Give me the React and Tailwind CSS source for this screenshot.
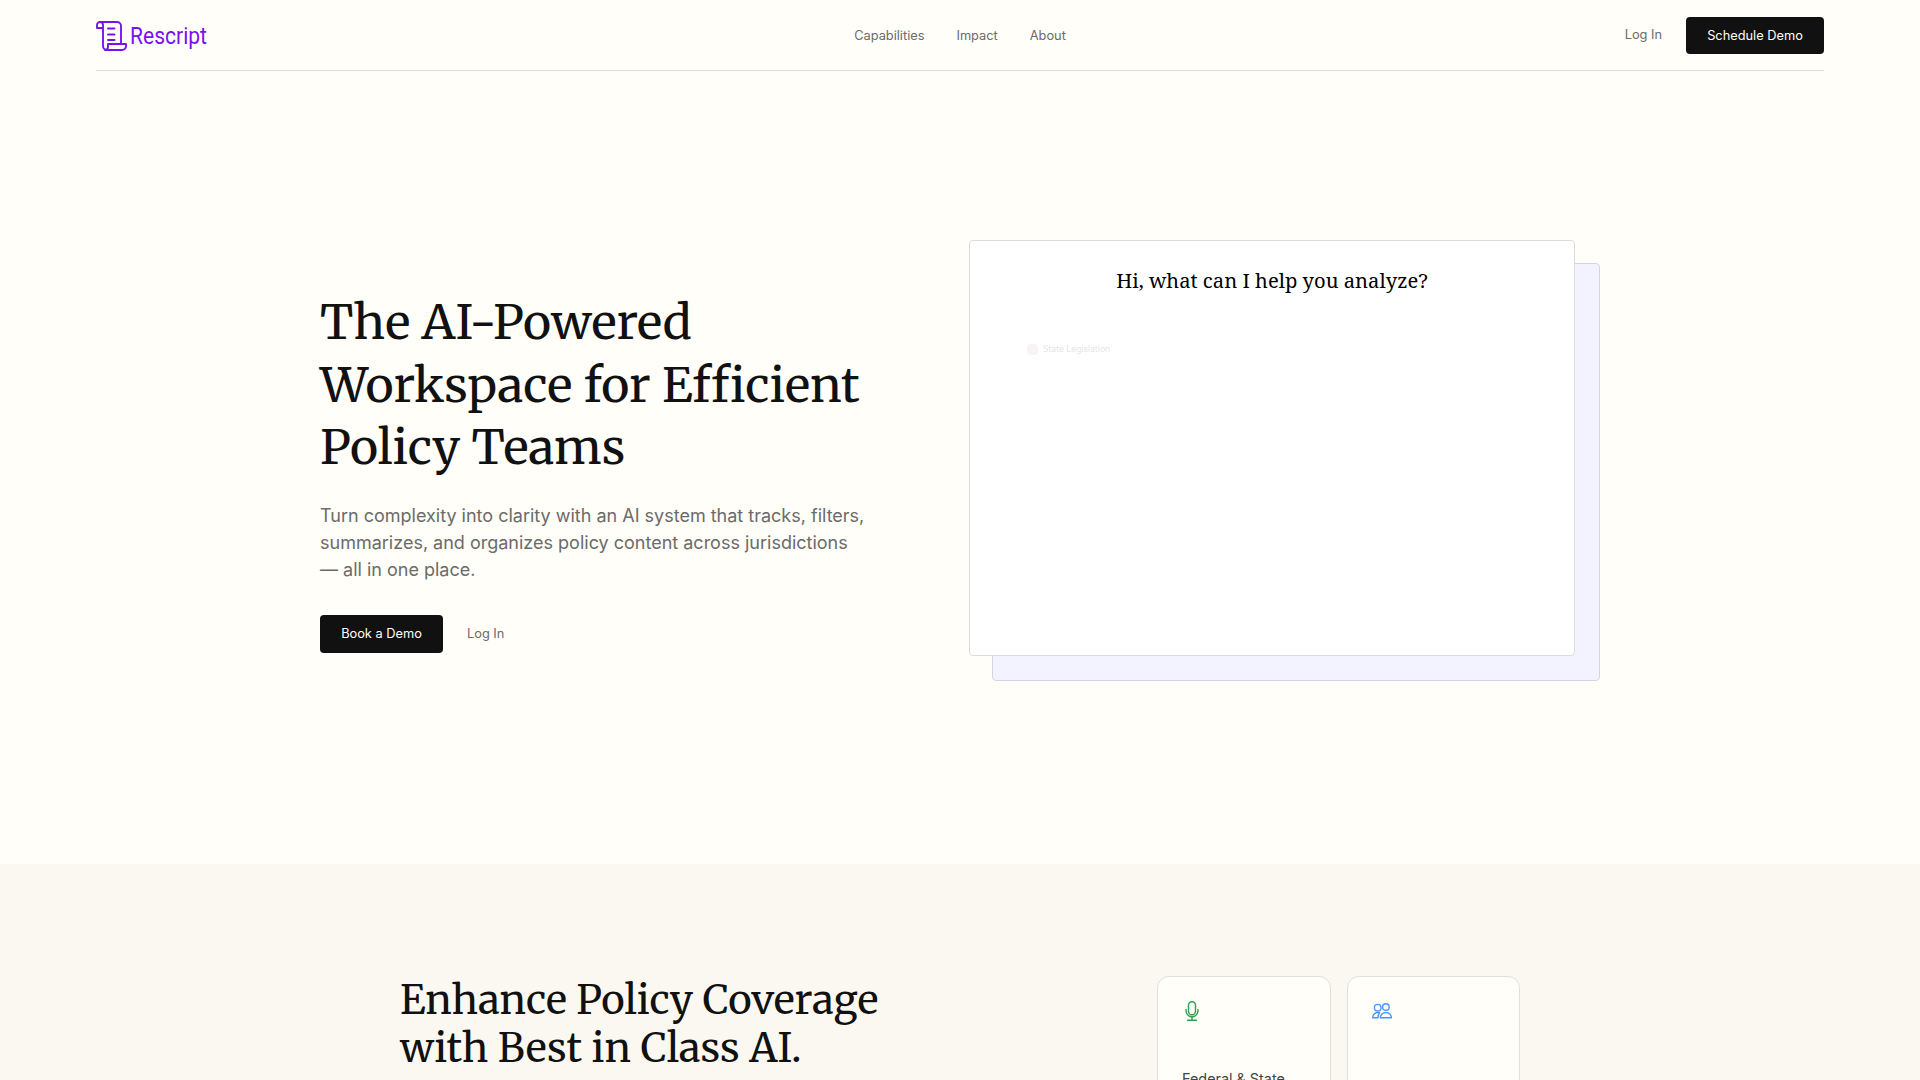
const Logo = () => (
    <svg width="116" height="38" viewBox="0 0 116 38" fill="none" stroke="#7a12f0" strokeWidth="1.9"
         strokeLinejoin="round" strokeLinecap="round">
        <path d="M7 9H1V6a3 3 0 0 1 6 0v21a4 4 0 0 0 4 4h15a4 4 0 0 0 4-4v-2H12v3a3 3 0 0 1-3 3"/>
        <path d="M4 3h17a4 4 0 0 1 4 4v18M12 9.500h6.500M12 15.500h6.500M12 21h6.500"/>
        <text x="34" y="24.500" textLength="77" lengthAdjust="spacingAndGlyphs" fill="#7a12f0" stroke="none"
              fontSize="24" fontFamily="Roboto, sans-serif">Rescript</text>
    </svg>
)

const Header = () => (
    <header className="mx-24 h-[71px] border-b border-[#dededb] grid grid-cols-3 items-center text-[12.8px] text-[#6b6b6b]">
        <a href="#" className="block pt-[5px]"><Logo/></a>
        <nav className="flex justify-center gap-8 pt-0.5">
            <a href="#">Capabilities</a>
            <a href="#">Impact</a>
            <a href="#">About</a>
        </nav>
        <div className="flex items-center justify-end gap-6">
            <a href="#">Log In</a>
            <a href="#" className="flex items-center justify-center w-[138px] h-[37px] pt-px rounded bg-[#111] text-[#fffef8]">Schedule
                Demo</a>
        </div>
    </header>
)

const Demo = () => (
    <div className="relative w-[631px] h-[441px]">
        <div className="absolute left-[23px] top-[23px] w-[608px] h-[418px] rounded border border-[#d6d6e2] bg-[#f3f3ff]"/>
        <div className="absolute left-0 top-0 w-[606px] h-[416px] rounded border border-[#dcdcdc] bg-white">
            <h2 className="mt-[25px] text-center text-[20.2px] leading-7 text-black font-['Noto_Serif','DejaVu_Serif',serif]">
                Hi, what can I help you analyze?
            </h2>
            <div className="mt-[47px] ml-[57px] flex items-center gap-[5px] text-[8.6px] leading-4 text-[#e6e6e6]">
                <span className="size-[11px] rounded-sm bg-[#f8f3f4]"/>
                State Legislation
            </div>
        </div>
    </div>
)

const Hero = () => (
    <section className="mx-auto w-[1280px] h-[793px] pt-[169px] flex justify-between items-start">
        <div className="pt-[51.3px] w-[570px]">
            <h1 className="text-[48px] leading-[62.4px] text-[#111] whitespace-nowrap font-['Merriweather','DejaVu_Serif',serif]">
                <span className="block">The AI-Powered</span>
                <span className="block">Workspace for Efficient</span>
                <span className="block">Policy Teams</span>
            </h1>
            <p className="mt-[23.5px] text-[18px] leading-[27px] text-[#6b6b6b] whitespace-nowrap">
                Turn complexity into clarity with an AI system that tracks, filters,<br/>
                summarizes, and organizes policy content across jurisdictions<br/>
                — all in one place.
            </p>
            <div className="mt-8 flex items-center gap-6 text-[12.8px] text-[#6b6b6b]">
                <a href="#" className="flex items-center justify-center w-[123px] h-[38px] rounded bg-[#111] text-[#fffef8]">Book
                    a Demo</a>
                <a href="#">Log In</a>
            </div>
        </div>
        <Demo/>
    </section>
)

const MicIcon = () => (
    <svg width="20" height="20" viewBox="0 0 20 20" fill="none" stroke="#2f9e4f" strokeWidth="1.4"
         strokeLinecap="round">
        <rect x="6.500" y="0.700" width="7" height="13" rx="3.500"/>
        <path d="M4 8.500v1.300a6 6 0 0 0 12 0V8.500M10 15.800v3.500M5.500 19.300h9"/>
    </svg>
)

const PeopleIcon = () => (
    <svg width="20" height="20" viewBox="0 0 20 20" fill="none" stroke="#4797ff" strokeWidth="1.4"
         strokeLinecap="round" strokeLinejoin="round">
        <circle cx="5.700" cy="6.700" r="3.300"/>
        <circle cx="13.900" cy="6" r="3.300"/>
        <path d="M8.300 16.800h11.100c0-3-2.400-5.300-5.500-5.300s-5.600 2.300-5.600 5.300zM7 11.600c-3.500-.600-6.300 1.700-6.300 5.200H6c0-2 .400-3.500 1.600-5"/>
    </svg>
)

const Card = ({icon, children}) => (
    <div className="h-[180px] rounded-xl border border-[#e0e0dd] bg-[#fffef8] p-6">
        {icon}
        <p className="mt-[47px] text-[14.4px] leading-[22px] text-[#444]">{children}</p>
    </div>
)

const Coverage = () => (
    <section className="h-[216px] overflow-hidden bg-[#fbf8f2]">
        <div className="mx-auto w-[1120px] pt-28 flex justify-between">
            <h2 className="text-[40px] leading-[48px] text-[#111] whitespace-nowrap font-['Merriweather','DejaVu_Serif',serif]">
                <span className="block">Enhance Policy Coverage</span>
                <span className="block">with Best in Class AI.</span>
            </h2>
            <div className="grid grid-cols-2 gap-4 w-[363px]">
                <Card icon={<MicIcon/>}>Federal &amp; State</Card>
                <Card icon={<PeopleIcon/>}/>
            </div>
        </div>
    </section>
)

const App = () => (
    <main className="h-[1080px] overflow-hidden bg-[#fffef8] font-['Inter',sans-serif]">
        <Header/>
        <Hero/>
        <Coverage/>
    </main>
)

export default App
